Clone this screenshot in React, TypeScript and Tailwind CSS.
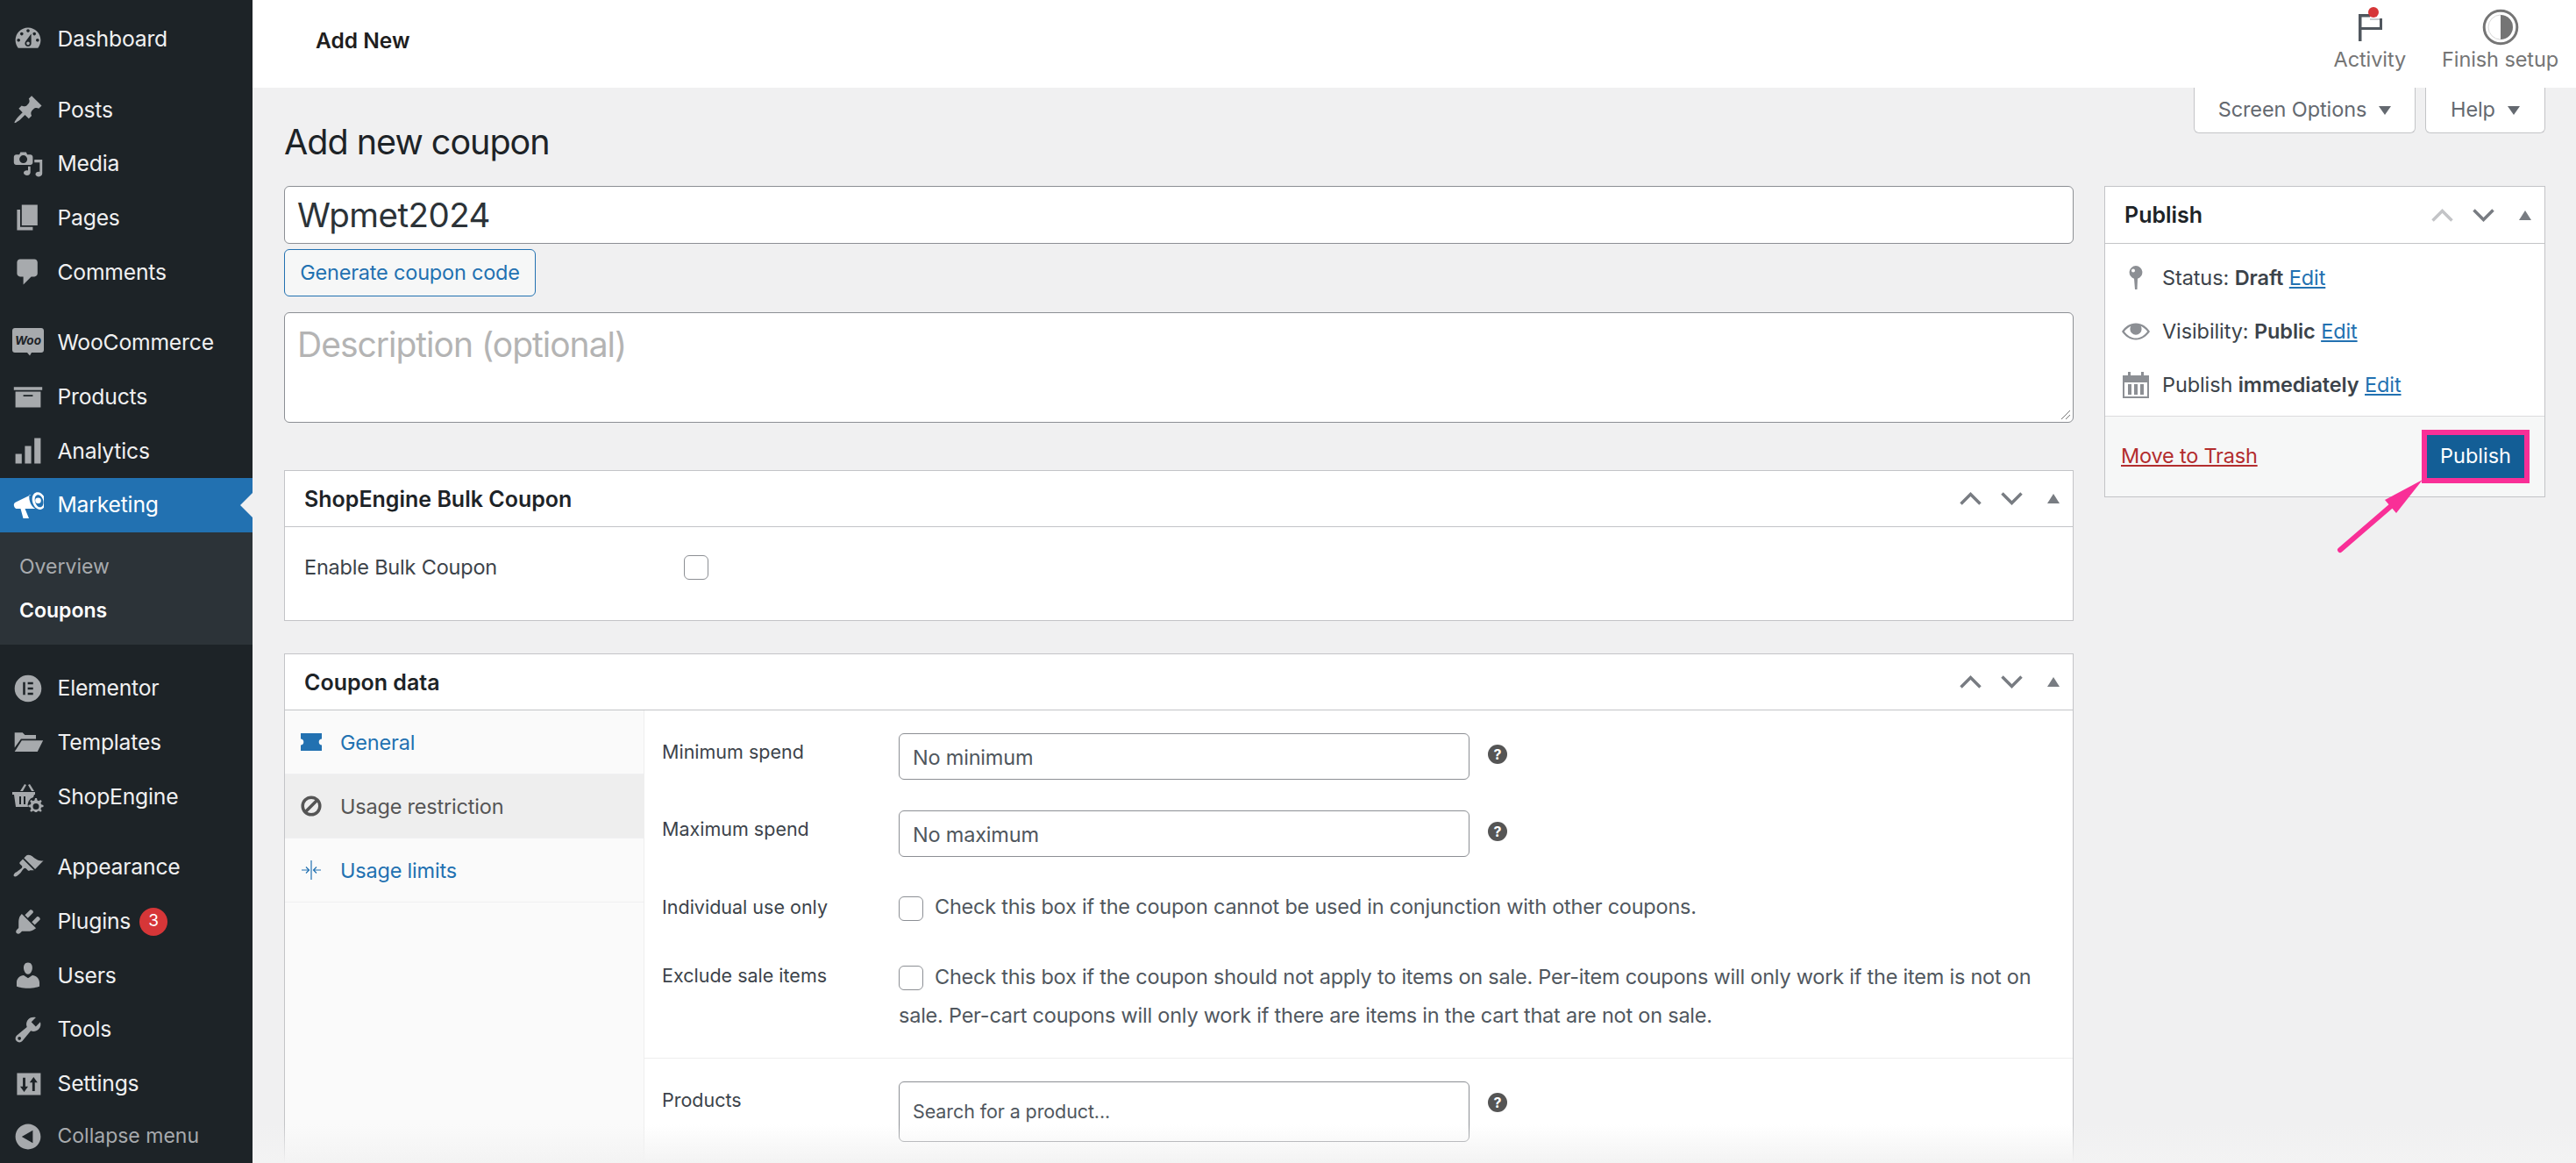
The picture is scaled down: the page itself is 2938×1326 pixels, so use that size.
import React from "react";

const D = ({ d, className = "" }: { d: string; className?: string }) => (
  <svg viewBox="0 0 20 20" className={"h-[36px] w-[36px] fill-current " + className}>
    <path d={d} fillRule="evenodd" />
  </svg>
);

const MediaIcon = () => (
  <svg viewBox="0 0 20 20" className="h-[36px] w-[36px] fill-current">
    <path fillRule="evenodd" d="M2.500 4h2l.7-1.500h3.600L9.500 4h2c.8 0 1.500.7 1.500 1.500v3.500c0 .8-.7 1.500-1.500 1.500h-9C1.700 10.500 1 9.800 1 9V5.500C1 4.700 1.700 4 2.500 4zM7 4.500a2.500 2.500 0 1 0 0 5 2.500 2.500 0 0 0 0-5z" />
    <path d="M14 7.200h5v8.800c0 1.100-.9 2-2.200 2-1.200 0-2.100-.7-2.100-1.600s1-1.600 2.100-1.600c.2 0 .400 0 .6.100V9h-3.400V7.200z" />
    <path d="M11.500 11.500v3.800c0 1.100-.9 1.900-2.100 1.900s-2.200-.7-2.200-1.600.9-1.600 2.100-1.600c.3 0 .5 0 .7.100v-2.600h1.500z" />
  </svg>
);

const WooIcon = () => (
  <svg viewBox="0 0 36 36" className="h-[36px] w-[36px]">
    <path fill="#a7aaad" d="M3 1h30c1.700 0 3 1.300 3 3v22c0 1.700-1.300 3-3 3h-11l-2 3.500-3-3.500H3c-1.700 0-3-1.300-3-3V4c0-1.700 1.300-3 3-3z" />
    <text x="18" y="20" textAnchor="middle" fontSize="13.500" fontWeight="700" fontStyle="italic" fontFamily="Inter, sans-serif" fill="#1d2327">Woo</text>
  </svg>
);

const ElementorIcon = () => (
  <svg viewBox="0 0 20 20" className="h-[36px] w-[36px] fill-current">
    <path fillRule="evenodd" d="M10 1.500a8.500 8.500 0 1 0 0 17 8.500 8.500 0 0 0 0-17zM6.800 6h1.400v8H6.800V6zm3 0h3.400v1.400H9.800V6zm0 3.300h3.400v1.400H9.800V9.300zm0 3.300h3.400V14H9.800v-1.400z" />
  </svg>
);

const FolderIcon = () => (
  <svg viewBox="0 0 20 20" className="h-[36px] w-[36px] fill-current">
    <path d="M1.500 3.500h5L8 5h7v2.500H5.500L1.500 13V3.500z" />
    <path d="M6 8.500h13.500L16 15.500H1.500L6 8.500z" />
  </svg>
);

const BasketIcon = () => (
  <svg viewBox="0 0 36 36" className="h-[36px] w-[36px] fill-current">
    <path d="M0 13h26v3h-1l-1 3a9 9 0 0 0-6 11H4L2 16H0v-3z" />
    <path d="M9 12l5-8 2 1-4 7H9zm13 0l-4-7 2-1 5 8h-3z" />
    <path fill="#1d2327" d="M8 18h2v9H8zm5 0h2v9h-2z" />
    <path fillRule="evenodd" d="M26 20l2 .1.500 2.400 1.700.8 2.100-1.300 1.400 1.500-1.300 2 .7 1.800 2.400.6v2l-2.400.6-.7 1.700 1.300 2.100-1.400 1.400-2.100-1.300-1.700.7-.5 2.400h-2l-.6-2.400-1.700-.7-2.100 1.300-1.400-1.400 1.300-2.100-.7-1.700-2.400-.6v-2l2.400-.6.7-1.800-1.300-2 1.400-1.500 2.100 1.300 1.700-.8.600-2.400zm1 6a3.500 3.500 0 1 0 0 7 3.500 3.500 0 0 0 0-7z" />
  </svg>
);

const SettingsIcon = () => (
  <svg viewBox="0 0 20 20" className="h-[36px] w-[36px] fill-current">
    <path fillRule="evenodd" d="M3 3h15v14H3V3zm3.700 3v5.500H5l2.500 3.500 2.500-3.500H8.300V6H6.700zm6 8.500V9H11l2.500-3.500L16 9h-1.700v5.500h-1.600z" />
  </svg>
);

const MegaphoneIcon = () => (
  <svg viewBox="0 0 36 36" className="h-[36px] w-[36px] fill-current text-white">
    <path d="M21.500 6L4 14.500c-1.800.8-2.500 2.600-2 4.500s2 3.300 4 3.100h3.500L12.500 33h6.500l-4.500-11h10c.5 0 1-.1 1.500-.3-2.700-1.500-5-4.500-6-8.300-.9-2.700-.7-5.400-.5-7.400z" />
    <path fillRule="evenodd" d="M27.700 3.300c-4 1-6 6-4.500 11.500s5.800 9 9.800 8c4-1.100 6-6.200 4.500-11.600S31.700 2.300 27.700 3.300zm.9 3c2.500-.7 5.400 1.800 6.500 5.700s0 7.500-2.500 8.200-5.400-1.800-6.500-5.700-.1-7.500 2.500-8.200z" />
    <circle cx="29.500" cy="12.800" r="3.300" />
  </svg>
);

const ICON = {
  dashboard: <D d="M3.760 16h12.480c1.100-1.370 1.760-3.110 1.760-5 0-4.420-3.580-8-8-8s-8 3.580-8 8c0 1.890.66 3.630 1.760 5zM10 4c.55 0 1 .45 1 1s-.45 1-1 1-1-.45-1-1 .45-1 1-1zM6 6c.55 0 1 .45 1 1s-.45 1-1 1-1-.45-1-1 .45-1 1-1zm8 0c.55 0 1 .45 1 1s-.45 1-1 1-1-.45-1-1 .45-1 1-1zm-5.370 5.550L12 7v6c0 1.100-.9 2-2 2s-2-.9-2-2c0-.57.24-1.080.63-1.450zM4 10c.55 0 1 .45 1 1s-.45 1-1 1-1-.45-1-1 .45-1 1-1zm12 0c.55 0 1 .45 1 1s-.45 1-1 1-1-.45-1-1 .45-1 1-1zm-5 3c0-.55-.45-1-1-1s-1 .45-1 1 .45 1 1 1 1-.45 1-1z" />,
  posts: <D d="M10.440 3.020l1.820-1.820 6.360 6.350-1.830 1.820c-1.050-.68-2.480-.57-3.410.36l-.75.75c-.92.93-1.040 2.350-.35 3.410l-1.830 1.820-2.410-2.410-2.800 2.790c-.42.42-3.380 2.710-3.800 2.290s1.860-3.390 2.280-3.810l2.790-2.790L4.100 9.360l1.830-1.820c1.050.69 2.480.57 3.400-.36l.75-.75c.93-.92 1.050-2.350.36-3.410z" />,
  pages: <D d="M6 15V2h10v13H6zm-1 1h8v2H3V5h2v11z" />,
  comments: <D d="M5 2h9c1.100 0 2 .9 2 2v7c0 1.100-.9 2-2 2h-2l-5 5v-5H5c-1.100 0-2-.9-2-2V4c0-1.100.9-2 2-2z" />,
  products: <D d="M19 4v2H1V4h18zM2 7h16v10H2V7zm11 3V9H7v1h6z" />,
  analytics: <D d="M18 18V2h-4v16h4zm-6 0V7H8v11h4zm-6 0v-6H2v6h4z" />,
  appearance: <D d="M14.480 11.060L7.410 3.990l1.500-1.500c.5-.56 2.300-.47 3.510.32 1.210.8 1.430 1.280 2.910 2.100 1.180.64 2.450 1.260 4.450.85zm-.71.71L6.700 4.700 4.930 6.470c-.39.39-.39 1.020 0 1.410l1.060 1.060c.39.39.39 1.030 0 1.420-.6.6-1.430 1.110-2.210 1.690-.35.26-.7.53-1.010.84C1.430 13.230.4 14.850 1.120 15.570c.71.72 2.340-.31 3.680-1.660.31-.31.58-.66.84-1.010.58-.78 1.090-1.610 1.690-2.210.39-.39 1.020-.39 1.410 0l1.060 1.060c.39.39 1.020.39 1.410 0z" />,
  plugins: <D d="M13.110 4.360L9.870 7.600 8 5.730l3.240-3.240c.35-.34 1.050-.2 1.560.32.52.51.66 1.210.31 1.550zm-8 1.770l.91-1.120 9.010 9.010-1.190.84c-.71.71-2.630 1.160-3.820 1.160H6.140L4.900 17.260c-.59.59-1.540.59-2.120 0-.59-.58-.59-1.530 0-2.120l1.240-1.240v-3.880c0-1.130.4-3.190 1.090-3.890zm7.260 3.970l3.240-3.240c.34-.35 1.040-.21 1.550.31.52.51.66 1.210.31 1.550l-3.240 3.250z" />,
  users: <D d="M10 9.250c-2.270 0-2.730-3.440-2.730-3.440C7 4.020 7.820 2 9.970 2c2.160 0 2.980 2.020 2.710 3.810 0 0-.41 3.440-2.680 3.440zm0 2.570L12.720 10c2.390 0 4.520 2.330 4.520 4.530v2.490s-3.650 1.130-7.240 1.130c-3.650 0-7.240-1.130-7.240-1.130v-2.490c0-2.250 1.940-4.480 4.470-4.480z" />,
  tools: <D d="M16.680 9.770c-1.340 1.340-3.300 1.670-4.950.99l-5.410 6.520c-.99.99-2.590.99-3.580 0s-.99-2.590 0-3.570l6.520-5.420c-.68-1.650-.35-3.610.99-4.950 1.280-1.280 3.120-1.620 4.720-1.060l-2.890 2.890 2.820 2.820 2.860-2.870c.53 1.580.18 3.390-1.080 4.650zM3.810 16.210c.4.39 1.040.39 1.430 0 .4-.4.4-1.040 0-1.430-.39-.4-1.030-.4-1.430 0-.39.39-.39 1.030 0 1.430z" />,
  collapse: <D d="M18 10c0-4.420-3.580-8-8-8s-8 3.580-8 8 3.580 8 8 8 8-3.580 8-8zm-5 4l-7-4 7-4v8z" />,
};

const Item = ({ icon, label, children, mt = false }: { icon: React.ReactNode; label: string; children?: React.ReactNode; mt?: boolean }) => (
  <div className={"flex h-[61.7px] items-center text-[#f0f0f1] " + (mt ? "mt-[19px]" : "")}>
    <span className="ml-[14px] flex w-[36px] justify-center text-[#a7aaad]">{icon}</span>
    <span className="ml-[15.500px] text-[24.700px] tracking-[-0.2px]">{label}</span>
    {children}
  </div>
);

const Sidebar = () => (
  <aside className="flex h-full w-[288px] shrink-0 flex-col bg-[#1d2327] pt-[13.500px]">
    <Item icon={ICON.dashboard} label="Dashboard" />
    <Item mt icon={ICON.posts} label="Posts" />
    <Item icon={<MediaIcon />} label="Media" />
    <Item icon={ICON.pages} label="Pages" />
    <Item icon={ICON.comments} label="Comments" />
    <Item mt icon={<WooIcon />} label="WooCommerce" />
    <Item icon={ICON.products} label="Products" />
    <Item icon={ICON.analytics} label="Analytics" />
    <div className="relative flex h-[62px] items-center bg-[#2271b1] text-white">
      <span className="ml-[14px] flex w-[36px] justify-center"><MegaphoneIcon /></span>
      <span className="ml-[15.500px] text-[24.700px] tracking-[-0.2px]">Marketing</span>
      <span className="absolute right-0 top-[17px] h-0 w-0 border-y-[14px] border-r-[14px] border-y-transparent border-r-[#f0f0f1]" />
    </div>
    <div className="flex h-[128px] flex-col justify-center gap-[23px] bg-[#2c3338] pl-[22px] text-[23px] leading-[27px]">
      <span className="text-[#a7aaad]">Overview</span>
      <span className="font-semibold text-white">Coupons</span>
    </div>
    <Item mt icon={<ElementorIcon />} label="Elementor" />
    <Item icon={<FolderIcon />} label="Templates" />
    <Item icon={<BasketIcon />} label="ShopEngine" />
    <Item mt icon={ICON.appearance} label="Appearance" />
    <Item icon={ICON.plugins} label="Plugins">
      <span className="ml-[10px] flex h-[32px] w-[32px] items-center justify-center rounded-full bg-[#d63638] text-[19px] text-white">3</span>
    </Item>
    <Item icon={ICON.users} label="Users" />
    <Item icon={ICON.tools} label="Tools" />
    <Item icon={<SettingsIcon />} label="Settings" />
    <div className="flex h-[58px] items-center text-[#a7aaad]">
      <span className="ml-[14px] flex w-[36px] justify-center">{ICON.collapse}</span>
      <span className="ml-[15.500px] text-[23px]">Collapse menu</span>
    </div>
  </aside>
);

const TopBar = () => (
  <header className="flex h-[100px] shrink-0 items-start justify-between bg-white">
    <div className="ml-[72px] mt-[30px] text-[24.500px] font-semibold leading-[32px] text-[#1e1e1e]">Add New</div>
    <div className="mr-[20px] flex gap-[41px] text-[23.500px] leading-[28px] tracking-[-0.1px] text-[#757575]">
      <div className="flex flex-col items-center pt-[7px]">
        <div className="relative h-[44px] w-[30px]">
          <svg viewBox="0 0 30 44" className="h-[44px] w-[30px]">
            <path d="M2 9h13v3.500H5.500V40H2V9zM26 14h3v13H5.500v-3H26V14z" fill="#50575e" />
            <path d="M15 15h11" stroke="#b5b8bb" strokeWidth="1.500" />
          </svg>
          <span className="absolute left-[13px] top-[1px] h-[12px] w-[12px] rounded-full bg-[#d63638]" />
        </div>
        <span className="mt-[3px]">Activity</span>
      </div>
      <div className="flex flex-col items-center pt-[10px]">
        <svg viewBox="0 0 42 42" className="h-[42px] w-[42px]">
          <circle cx="21" cy="21" r="18.800" fill="none" stroke="#757575" strokeWidth="3" />
          <path d="M21 7a14 14 0 0 1 0 28V7z" fill="#757575" />
          <path d="M21 7a14 14 0 0 0 0 28" fill="none" stroke="#d8d8d8" strokeWidth="1" />
        </svg>
        <span className="mt-[2px]">Finish setup</span>
      </div>
    </div>
  </header>
);

const Chevron = ({ up, light }: { up?: boolean; light?: boolean }) => (
  <svg viewBox="0 0 25 15" className={"h-[15px] w-[25px] fill-none " + (light ? "stroke-[#c3c4c7]" : "stroke-[#787c82]")} strokeWidth="3.500">
    <path d={up ? "M1.500 13.500L12.500 2.500L23.500 13.500" : "M1.500 1.500L12.500 12.500L23.500 1.500"} />
  </svg>
);

const BoxControls = ({ light }: { light?: boolean }) => (
  <div className="flex items-center">
    <Chevron up light={light} />
    <span className="ml-[22px]"><Chevron /></span>
    <span className="ml-[28px] h-0 w-0 border-x-[7px] border-b-[11px] border-x-transparent border-b-[#787c82]" />
  </div>
);

const Check = () => <span className="inline-block h-[28px] w-[28px] shrink-0 rounded-[6px] border border-[#8c8f94] bg-white align-middle" />;

const Help = () => (
  <span className="flex h-[22px] w-[22px] items-center justify-center rounded-full bg-[#555] text-[16px] font-bold leading-none text-white">?</span>
);

const Label = ({ children, className = "" }: { children: React.ReactNode; className?: string }) => (
  <div className={"w-[270px] shrink-0 text-[21.500px] leading-[28px] text-[#3c434a] " + className}>{children}</div>
);

const Field = ({ label, value }: { label: string; value: string }) => (
  <div className="flex">
    <Label className="pt-[7px]">{label}</Label>
    <div className="flex h-[53px] w-[651px] items-center rounded-[6px] border border-[#8c8f94] bg-white pl-[15px] pt-[2px] text-[23.500px] tracking-[-0.2px] text-[#50575e]">{value}</div>
    <span className="ml-[21px] mt-[13px]"><Help /></span>
  </div>
);

const Box = ({ title, light, children, className = "" }: { title: string; light?: boolean; children: React.ReactNode; className?: string }) => (
  <section className={"border border-[#c3c4c7] bg-white " + className}>
    <div className="flex h-[64px] items-center justify-between border-b border-[#c3c4c7] pl-[22px] pr-[15px]">
      <h2 className="pt-[2px] text-[25px] font-semibold text-[#1d2327]">{title}</h2>
      <BoxControls light={light} />
    </div>
    {children}
  </section>
);

const Tab = ({ icon, label, active }: { icon: React.ReactNode; label: string; active?: boolean }) => (
  <div className={"flex h-[73px] items-center border-b border-[#f0f0f1] pl-[18px] text-[23.500px] tracking-[-0.2px] " + (active ? "bg-[#eeeeee] text-[#555555]" : "text-[#2271b1]")}>
    <span className="flex w-[24px] justify-center">{icon}</span>
    <span className="ml-[21px] pt-[2px]">{label}</span>
  </div>
);

const Ticket = () => (
  <svg viewBox="0 0 24 20" className="h-[20px] w-[24px] fill-[#2271b1]">
    <path d="M0 0h24v6.500c-2 0-3.300 1.500-3.300 3.500s1.300 3.500 3.300 3.500V20H0v-6.500c2 0 3.300-1.500 3.300-3.500S2 6.500 0 6.500V0z" />
  </svg>
);

const Ban = () => (
  <svg viewBox="0 0 24 24" className="h-[24px] w-[24px] fill-none stroke-[#555555]" strokeWidth="3.500">
    <circle cx="12" cy="12" r="9.800" />
    <path d="M18.500 5.500L5.500 18.500" />
  </svg>
);

const Limits = () => (
  <svg viewBox="0 0 24 24" className="h-[24px] w-[24px] fill-none stroke-[#2271b1]" strokeWidth="1.200">
    <path d="M12 1v22M1 12h8M6 8.500l3.500 3.500L6 15.500M23 12h-8M18 8.500L14.500 12l3.500 3.500" />
  </svg>
);

const CouponData = () => (
  <Box title="Coupon data" className="mt-[37px] h-[620px]">
    <div className="flex h-full">
      <nav className="h-full w-[409px] shrink-0 bg-[#fafafa]">
        <Tab icon={<Ticket />} label="General" />
        <Tab active icon={<Ban />} label="Usage restriction" />
        <Tab icon={<Limits />} label="Usage limits" />
      </nav>
      <div className="min-w-0 flex-1 border-l border-[#eeeeee] text-[#50575e]">
        <div className="border-b border-[#eeeeee] pb-[26px] pl-[20px] pt-[26px]">
          <Field label="Minimum spend" value="No minimum" />
          <div className="mt-[35px]"><Field label="Maximum spend" value="No maximum" /></div>
          <div className="mt-[43px] flex">
            <Label>Individual use only</Label>
            <div className="whitespace-nowrap text-[23.500px] leading-[28px] tracking-[-0.23px]"><Check /><span className="ml-[13px]">Check this box if the coupon cannot be used in conjunction with other coupons.</span></div>
          </div>
          <div className="mt-[50px] flex">
            <Label className="-mt-[2px]">Exclude sale items</Label>
            <div className="-mt-[8px] whitespace-nowrap text-[23.500px] leading-[44px] tracking-[-0.23px]"><Check /><span className="ml-[13px]">Check this box if the coupon should not apply to items on sale. Per-item coupons will only work if the item is not on</span><br />sale. Per-cart coupons will only work if there are items in the cart that are not on sale.</div>
          </div>
        </div>
        <div className="flex pl-[20px] pt-[26px]">
          <Label className="pt-[7px]">Products</Label>
          <div className="flex h-[69px] w-[651px] items-center rounded-[6px] border border-[#8c8f94] bg-white pl-[15px] text-[21.500px] tracking-[-0.1px] text-[#50575e]">Search for a product...</div>
          <span className="ml-[21px] mt-[13px]"><Help /></span>
        </div>
      </div>
    </div>
  </Box>
);

const MainColumn = () => (
  <div className="w-[2041px] shrink-0">
    <div className="flex h-[66px] items-center rounded-[6px] border border-[#8c8f94] bg-white pl-[14px] pt-[2px] text-[38.500px] tracking-[-0.5px] text-[#2c3338]">Wpmet2024</div>
    <div className="mt-[6px] flex h-[54px] w-[287px] items-center justify-center rounded-[6px] border border-[#2271b1] bg-[#f6f7f7] text-[23.500px] tracking-[-0.2px] text-[#2271b1]">Generate coupon code</div>
    <div className="relative mt-[18px] h-[126px] rounded-[6px] border border-[#8c8f94] bg-white pl-[14px] pt-[12px] text-[39px] leading-[48px] tracking-[-1px] text-[#b4b4b4]">
      Description (optional)
      <svg viewBox="0 0 14 14" className="absolute bottom-[2px] right-[2px] h-[14px] w-[14px] stroke-[#777777]">
        <path d="M13 3L3 13M13 8l-5 5" />
      </svg>
    </div>
    <Box title="ShopEngine Bulk Coupon" className="mt-[54px] h-[172px]">
      <div className="flex items-center pl-[22px] pt-[28px] text-[23.500px] tracking-[-0.2px] text-[#3c434a]">
        <span className="w-[433px]">Enable Bulk Coupon</span>
        <Check />
      </div>
    </Box>
    <CouponData />
  </div>
);

const PubRow = ({ icon, children }: { icon: React.ReactNode; children: React.ReactNode }) => (
  <div className="flex h-[61px] items-center text-[23.500px] tracking-[-0.1px] text-[#3c434a]">
    <span className="flex w-[32px] justify-center text-[#8c8f94]">{icon}</span>
    <span className="ml-[14px]">{children}</span>
  </div>
);

const Edit = () => <span className="text-[#2271b1] underline">Edit</span>;

const Pin = () => (
  <svg viewBox="0 0 16 28" className="h-[28px] w-[16px] fill-[#8c8f94]">
    <path fillRule="evenodd" d="M8 0a7.500 7.500 0 0 1 2 14.700L9.500 27H7L6 14.700A7.500 7.500 0 0 1 8 0zM5 3.500a2 2 0 1 0 0 4 2 2 0 0 0 0-4z" />
  </svg>
);

const Eye = () => (
  <svg viewBox="0 0 34 22" className="h-[22px] w-[34px] fill-[#8c8f94]">
    <path fillRule="evenodd" d="M17 1c7 0 13 4 17 10-4 6-10 10-17 10S4 17 0 11C4 5 10 1 17 1zM3 11c3.400 4.600 8.500 8 14 8s10.600-3.400 14-8c-2.200-3-4.800-5.200-8-6.700.6 1 1 2.200 1 3.700a7 7 0 1 1-14 0c0-1.500.4-2.700 1-3.700C8 5.800 5.200 8 3 11z" />
  </svg>
);

const Cal = () => (
  <svg viewBox="0 0 30 30" className="h-[30px] w-[30px] fill-[#8c8f94]">
    <path fillRule="evenodd" d="M0 4h6V0h3v4h12V0h3v4h6v26H0V4zm2 8v16h26V12H2z" />
    <path d="M6 14h4v12H6zm7 0h4v12h-4zm7 0h4v12h-4z" />
  </svg>
);

const PublishBox = () => (
  <section className="h-[355px] border border-[#c3c4c7] bg-white">
    <div className="flex h-[65px] items-center justify-between border-b border-[#c3c4c7] pl-[22px] pr-[15px]">
      <h2 className="pt-[2px] text-[25px] font-semibold text-[#1d2327]">Publish</h2>
      <BoxControls light />
    </div>
    <div className="h-[196px] pl-[19px] pt-[8px]">
      <PubRow icon={<Pin />}>Status: <b className="font-semibold">Draft</b> <Edit /></PubRow>
      <PubRow icon={<Eye />}>Visibility: <b className="font-semibold">Public</b> <Edit /></PubRow>
      <PubRow icon={<Cal />}>Publish <b className="font-semibold">immediately</b> <Edit /></PubRow>
    </div>
    <div className="flex h-[92px] items-center justify-between border-t border-[#dcdcde] bg-[#f6f7f7] pl-[18px] pr-[17px]">
      <span className="pb-[2px] text-[23.500px] tracking-[-0.2px] text-[#b32d2e] underline">Move to Trash</span>
      <span className="flex h-[61px] w-[123px] items-center justify-center border-[6px] border-[#f92f97] bg-[#135e96] pb-[1px] text-[23.500px] text-white">Publish</span>
    </div>
  </section>
);

const MetaTab = ({ label, className }: { label: string; className: string }) => (
  <div className={"flex h-[52px] items-center justify-center gap-[14px] rounded-b-[6px] border border-t-0 border-[#c3c4c7] bg-white pb-[2px] text-[23.500px] tracking-[-0.1px] text-[#646970] " + className}>
    {label}
    <span className="mt-[3px] h-0 w-0 border-x-[7px] border-t-[10px] border-x-transparent border-t-[#646970]" />
  </div>
);

export default function App() {
  return (
    <div className="relative flex h-[1326px] w-[2938px] overflow-hidden bg-[#f0f0f1] [font-family:Inter,'Liberation_Sans',sans-serif]">
      <Sidebar />
      <main className="flex min-w-0 flex-1 flex-col">
        <TopBar />
        <div className="pl-[36px] pr-[35px]">
          <div className="flex h-[112px] items-start justify-between">
            <h1 className="mt-[42px] text-[39.500px] leading-[40px] tracking-[-1px] text-[#1d2327]">Add new coupon</h1>
            <div className="flex gap-[11px]">
              <MetaTab label="Screen Options" className="w-[253px]" />
              <MetaTab label="Help" className="w-[137px]" />
            </div>
          </div>
          <div className="flex gap-[35px]">
            <MainColumn />
            <div className="w-[503px] shrink-0"><PublishBox /></div>
          </div>
        </div>
      </main>
      <svg viewBox="0 0 2938 1326" className="pointer-events-none absolute inset-0 h-[1326px] w-[2938px]">
        <path d="M2669 627L2727 577" stroke="#f92f97" strokeWidth="6" strokeLinecap="round" />
        <path d="M2763 547L2720 570L2733 585Z" fill="#f92f97" />
      </svg>
      <div className="pointer-events-none absolute bottom-0 left-[288px] right-0 h-[44px] bg-gradient-to-b from-transparent to-[#f3f3f3]" />
    </div>
  );
}
